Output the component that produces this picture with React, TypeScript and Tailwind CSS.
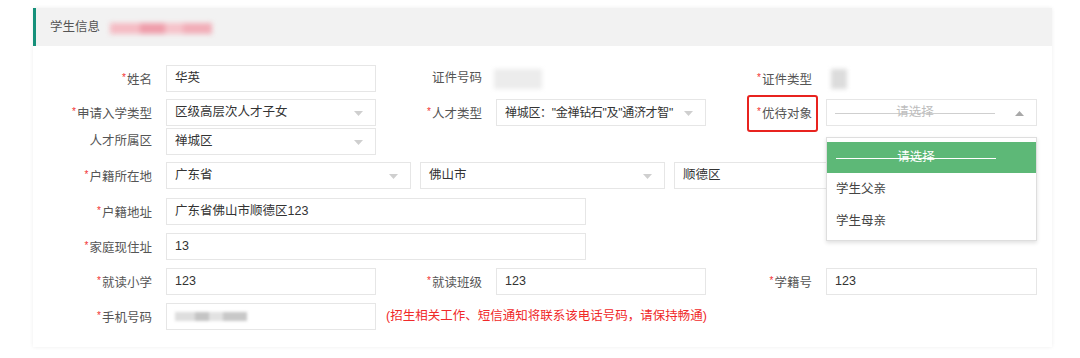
import type { ReactNode } from "react";

const FONT = { fontFamily: '"Liberation Sans", "Noto Sans CJK SC", sans-serif' };

const box = "h-[27px] border border-[#e6e6e6] bg-white flex items-center pl-[8px] text-[#333] shrink-0";

function Caret({ up }: { up?: boolean }) {
  return (
    <svg width="9" height="5" viewBox="0 0 9 5" className="absolute right-[12px] top-[11px]">
      {up ? <path d="M0 5 L4.5 0 L9 5 Z" fill="#a8a8a8" /> : <path d="M0 0 L4.5 5 L9 0 Z" fill="#cfcfcf" />}
    </svg>
  );
}

function Label({ text, req = true }: { text: string; req?: boolean }) {
  return (
    <div className="w-[106px] shrink-0 text-right text-[#555] leading-[17px]">
      {req && <span className="text-[#f23030] text-[10px] mr-[1px] align-[3px]">*</span>}
      {text}
    </div>
  );
}

function Input({ value, w = "w-[210px]" }: { value?: ReactNode; w?: string }) {
  return <div className={`${box} ${w}`}>{value}</div>;
}

function Select({ value, w = "w-[210px]", textCls = "" }: { value: string; w?: string; textCls?: string }) {
  return (
    <div className={`${box} ${w} relative overflow-hidden`}>
      <span className={`whitespace-nowrap ${textCls}`}>{value}</span>
      <Caret />
    </div>
  );
}

function Field({ label, req, children }: { label: string; req?: boolean; children: ReactNode }) {
  return (
    <div className="w-[330px] flex items-center shrink-0">
      <Label text={label} req={req} />
      <div className="ml-[14px] flex items-center">{children}</div>
    </div>
  );
}

function Placeholder({ light }: { light?: boolean }) {
  return (
    <div className="relative w-[160px] h-[17px] flex items-center justify-center">
      <div className={`absolute left-0 right-0 top-[9px] h-px ${light ? "bg-white" : "bg-[#cfcfcf]"}`} />
      <span className={`relative leading-[17px] ${light ? "text-white" : "text-[#bdbdbd]"}`}>请选择</span>
    </div>
  );
}

export default function App() {
  return (
    <div className="w-[1080px] h-[358px] bg-white text-[12.5px] overflow-hidden" style={FONT}>
      <div className="ml-[33px] pt-[8px]">
        <div className="w-[1019px] h-[339px] bg-white shadow-[0_0_4px_rgba(0,0,0,0.07)]">
          <div className="h-[38px] bg-[#f2f2f2] border-l-[3px] border-[#16907a] flex items-center pl-[14px]">
            <span className="text-[#555]">学生信息</span>
            <div className="ml-[10px] flex items-center blur-[2.5px] h-[12px] mt-[3px]">
              <div className="w-[30px] h-[11px] bg-[#f5bcc4]" />
              <div className="w-[25px] h-[11px] bg-[#ef9eab]" />
              <div className="w-[18px] h-[11px] bg-[#f6c3ca]" />
              <div className="w-[29px] h-[11px] bg-[#f2aeb8]" />
            </div>
          </div>

          <div className="pl-[13px]">
            <div className="flex items-center h-[27px] mt-[19px]">
              <Field label="姓名">
                <Input value="华英" />
              </Field>
              <Field label="证件号码" req={false}>
                <div className="w-[48px] h-[20px] bg-[#ececec] blur-[2px] -ml-[2px]" />
              </Field>
              <Field label="证件类型">
                <div className="w-[16px] h-[20px] bg-[#dcdcdc] blur-[2px] ml-[5px]" />
              </Field>
            </div>

            <div className="flex items-center h-[27px] mt-[7px]">
              <Field label="申请入学类型">
                <Select value="区级高层次人才子女" />
              </Field>
              <Field label="人才类型">
                <Select value={"禅城区：\"金禅钻石\"及\"通济才智\""} textCls="text-[12px] tracking-[-0.3px]" />
              </Field>
              <div className="w-[330px] flex items-center shrink-0">
                <div className="w-[106px] shrink-0 flex justify-end">
                  <span className="relative text-[#555] leading-[17px]">
                    <span className="text-[#f23030] text-[10px] mr-[1px] align-[3px]">*</span>
                    优待对象
                    <span className="absolute -left-[10px] -right-[6px] -top-[8px] -bottom-[9px] border-2 border-[#e8231f] rounded-[3px]" />
                  </span>
                </div>
                <div className="ml-[14px] relative">
                  <div className={`${box} w-[211px] relative`}>
                    <Placeholder />
                    <Caret up />
                  </div>
                  <div className="absolute left-0 top-[38px] w-[211px] h-[104px] z-10 bg-white border border-[#dedede] shadow-[0_2px_4px_rgba(0,0,0,0.12)] pt-[4px]">
                    <div className="h-[31px] bg-[#5db877] flex items-center pl-[9px]">
                      <Placeholder light />
                    </div>
                    <div className="h-[32px] flex items-center pl-[9px] text-[#444]">学生父亲</div>
                    <div className="h-[32px] flex items-center pl-[9px] text-[#444]">学生母亲</div>
                  </div>
                </div>
              </div>
            </div>

            <div className="flex items-center h-[27px] mt-[2px]">
              <Field label="人才所属区" req={false}>
                <Select value="禅城区" />
              </Field>
            </div>

            <div className="flex items-center h-[27px] mt-[7px]">
              <Label text="户籍所在地" />
              <div className="ml-[14px] flex gap-[9px]">
                <Select value="广东省" w="w-[245px]" />
                <Select value="佛山市" w="w-[245px]" />
                <Select value="顺德区" w="w-[245px]" />
              </div>
            </div>

            <div className="flex items-center h-[27px] mt-[9px]">
              <Label text="户籍地址" />
              <div className="ml-[14px]">
                <Input value="广东省佛山市顺德区123" w="w-[420px]" />
              </div>
            </div>

            <div className="flex items-center h-[27px] mt-[8px]">
              <Label text="家庭现住址" />
              <div className="ml-[14px]">
                <Input value="13" w="w-[420px]" />
              </div>
            </div>

            <div className="flex items-center h-[27px] mt-[8px]">
              <Field label="就读小学">
                <Input value="123" />
              </Field>
              <Field label="就读班级">
                <Input value="123" />
              </Field>
              <Field label="学籍号">
                <Input value="123" w="w-[211px]" />
              </Field>
            </div>

            <div className="flex items-center h-[27px] mt-[8px]">
              <Label text="手机号码" />
              <div className="ml-[14px] flex items-center">
                <Input
                  w="w-[210px]"
                  value={
                    <div className="flex items-center blur-[1.5px] h-[10px]">
                      <div className="w-[20px] h-[9px] bg-[#dedede]" />
                      <div className="w-[14px] h-[9px] bg-[#c4c4c4]" />
                      <div className="w-[14px] h-[9px] bg-[#e2e2e2]" />
                      <div className="w-[24px] h-[9px] bg-[#c8c8c8]" />
                    </div>
                  }
                />
                <span className="ml-[10px] text-[#f02a2a]">(招生相关工作、短信通知将联系该电话号码，请保持畅通)</span>
              </div>
            </div>
          </div>
        </div>
      </div>
    </div>
  );
}
